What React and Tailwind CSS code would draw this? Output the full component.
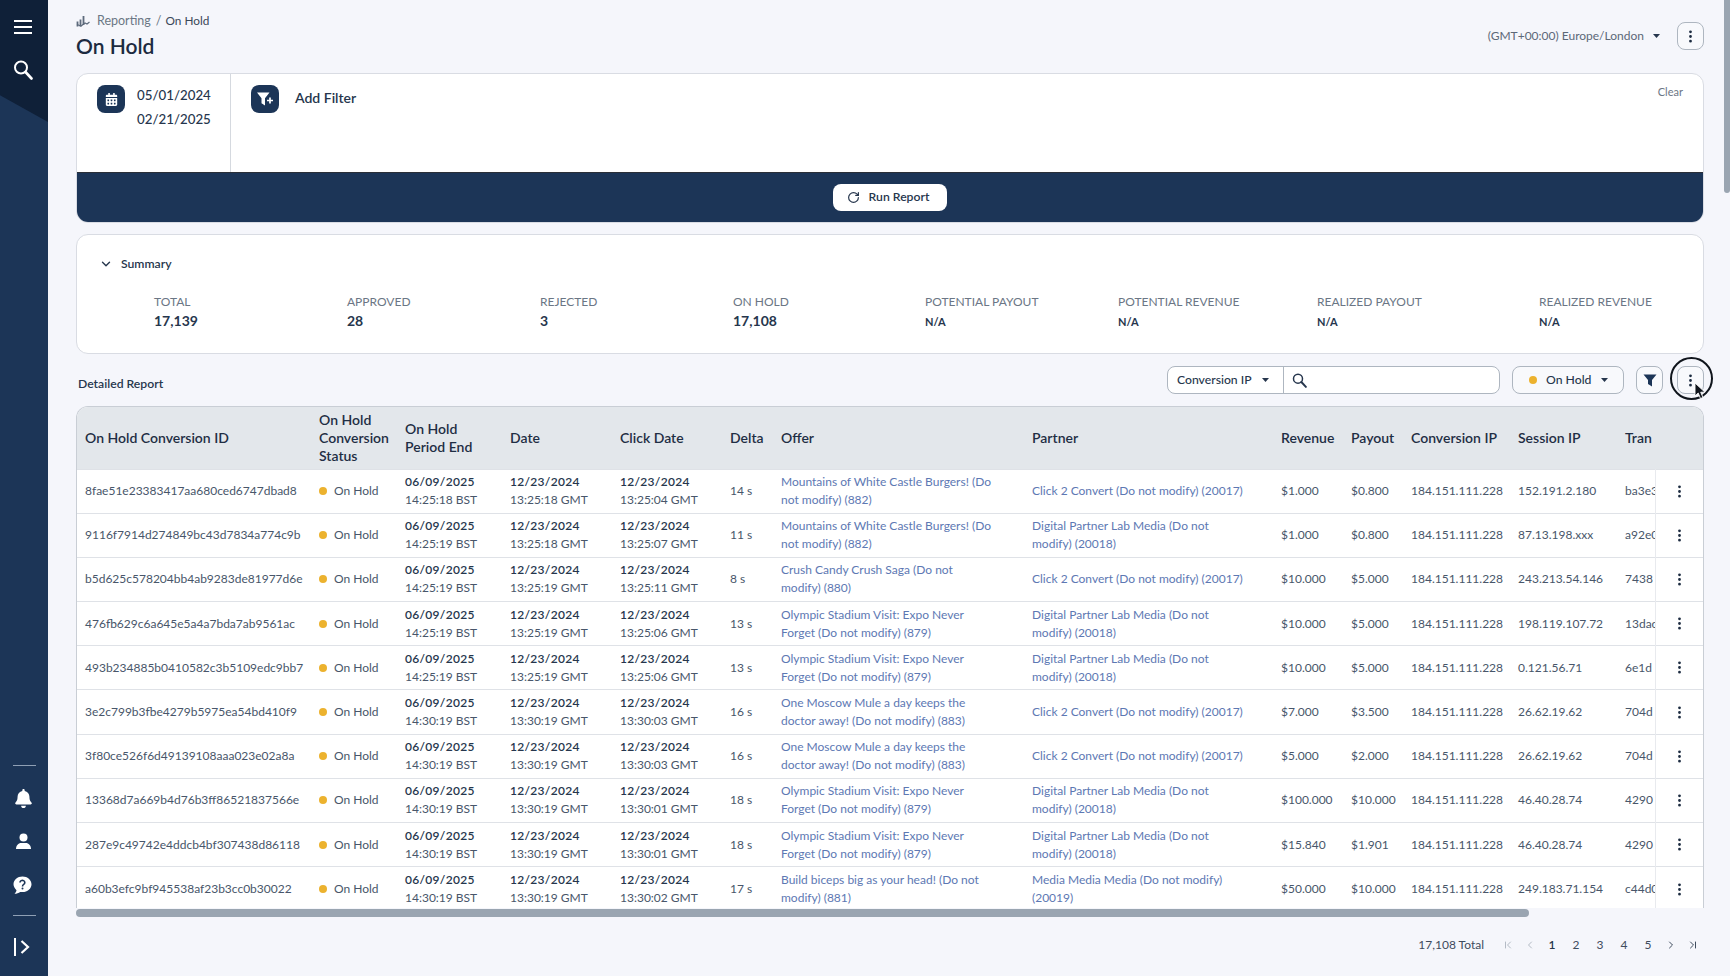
import React from "react";
import { ChevronDown, ChevronLeft, ChevronRight, ChevronFirst, ChevronLast, RotateCw } from "lucide-react";
import { FaBell, FaCalendarAlt } from "react-icons/fa";
import { BsThreeDotsVertical } from "react-icons/bs";

const mountains = "Mountains of White Castle Burgers! (Do not modify) (882)";
const olympic = "Olympic Stadium Visit: Expo Never Forget (Do not modify) (879)";
const moscow = "One Moscow Mule a day keeps the doctor away! (Do not modify) (883)";
const click2 = "Click 2 Convert (Do not modify) (20017)";
const digital = "Digital Partner Lab Media (Do not modify) (20018)";

const rows = [
  ["8fae51e23383417aa680ced6747dbad8", "14:25:18 BST", "13:25:18 GMT", "13:25:04 GMT", "14 s", mountains, click2, "$1.000", "$0.800", "152.191.2.180", "ba3e3f1"],
  ["9116f7914d274849bc43d7834a774c9b", "14:25:19 BST", "13:25:18 GMT", "13:25:07 GMT", "11 s", mountains, digital, "$1.000", "$0.800", "87.13.198.xxx", "a92e0c1"],
  ["b5d625c578204bb4ab9283de81977d6e", "14:25:19 BST", "13:25:19 GMT", "13:25:11 GMT", "8 s", "Crush Candy Crush Saga (Do not modify) (880)", click2, "$10.000", "$5.000", "243.213.54.146", "7438"],
  ["476fb629c6a645e5a4a7bda7ab9561ac", "14:25:19 BST", "13:25:19 GMT", "13:25:06 GMT", "13 s", olympic, digital, "$10.000", "$5.000", "198.119.107.72", "13dac41"],
  ["493b234885b0410582c3b5109edc9bb7", "14:25:19 BST", "13:25:19 GMT", "13:25:06 GMT", "13 s", olympic, digital, "$10.000", "$5.000", "0.121.56.71", "6e1d"],
  ["3e2c799b3fbe4279b5975ea54bd410f9", "14:30:19 BST", "13:30:19 GMT", "13:30:03 GMT", "16 s", moscow, click2, "$7.000", "$3.500", "26.62.19.62", "704d"],
  ["3f80ce526f6d49139108aaa023e02a8a", "14:30:19 BST", "13:30:19 GMT", "13:30:03 GMT", "16 s", moscow, click2, "$5.000", "$2.000", "26.62.19.62", "704d"],
  ["13368d7a669b4d76b3ff86521837566e", "14:30:19 BST", "13:30:19 GMT", "13:30:01 GMT", "18 s", olympic, digital, "$100.000", "$10.000", "46.40.28.74", "4290"],
  ["287e9c49742e4ddcb4bf307438d86118", "14:30:19 BST", "13:30:19 GMT", "13:30:01 GMT", "18 s", olympic, digital, "$15.840", "$1.901", "46.40.28.74", "4290"],
  ["a60b3efc9bf945538af23b3cc0b30022", "14:30:19 BST", "13:30:19 GMT", "13:30:02 GMT", "17 s", "Build biceps big as your head! (Do not modify) (881)", "Media Media Media (Do not modify) (20019)", "$50.000", "$10.000", "249.183.71.154", "c44d0e8"],
];

const stats = [
  ["TOTAL", "17,139"],
  ["APPROVED", "28"],
  ["REJECTED", "3"],
  ["ON HOLD", "17,108"],
  ["POTENTIAL PAYOUT", "N/A"],
  ["POTENTIAL REVENUE", "N/A"],
  ["REALIZED PAYOUT", "N/A"],
  ["REALIZED REVENUE", "N/A"],
];

const Caret = () => (
  <svg width="7" height="4" viewBox="0 0 7 4" className="shrink-0">
    <path d="M0 0h7L3.500 4z" fill="#26364d" />
  </svg>
);

const SearchIcon = ({ size, color }) => (
  <svg width={size} height={size} viewBox="0 0 20 20" className="shrink-0">
    <circle cx="8" cy="7.500" r="6" fill="none" stroke={color} strokeWidth="2" />
    <path d="M12.500 12l6 6.500" stroke={color} strokeWidth="2.600" strokeLinecap="round" />
  </svg>
);

const HelpIcon = () => (
  <svg width="20" height="20" viewBox="0 0 20 20">
    <path d="M10.500 1.500c5 0 9 3.400 9 7.800s-4 7.800-9 7.800c-.8 0-1.600-.1-2.300-.2-1.500 1.100-3.600 1.800-5.700 1.900 1.100-1 1.800-2.200 2-3.500C2.700 13.400 1.500 11.500 1.500 9.300c0-4.400 4-7.800 9-7.800z" fill="#fff" />
    <path d="M8 7.500a2.400 2.200 0 1 1 3.700 1.900c-.9.600-1.200 1-1.200 2" fill="none" stroke="#1c3557" strokeWidth="1.600" />
    <circle cx="10.500" cy="13.500" r="1" fill="#1c3557" />
  </svg>
);

const UserIcon = () => (
  <svg width="17" height="17" viewBox="0 0 17 17">
    <circle cx="8.500" cy="4.500" r="4" fill="#fff" />
    <path d="M1 16c0-3.500 2.500-6 5-6h5c2.500 0 5 2.500 5 6z" fill="#fff" />
  </svg>
);

const FilterPlus = () => (
  <svg width="18" height="18" viewBox="0 0 18 18">
    <path d="M1 2.500h12.500L9 8.300v7.200l-3.500-2.200V8.300z" fill="#fff" />
    <path d="M14 7.500v6M11 10.500h6" stroke="#fff" strokeWidth="1.700" />
  </svg>
);

const FunnelIcon = () => (
  <svg width="14" height="14" viewBox="0 0 14 14">
    <path d="M.5 1.500h13L9 7v6.500L5 11V7z" fill="#1c3557" />
  </svg>
);

const ChartIcon = () => (
  <svg width="14" height="12" viewBox="0 0 14 12" className="shrink-0">
    <path d="M1.500 6.500v5M4.500 4.500v7M7.500 1v9" stroke="#5d6a7c" strokeWidth="1.800" />
    <path d="M1 9.500l4 1.500 4-3 2 1 2.500-2" stroke="#5d6a7c" strokeWidth="1.200" fill="none" />
  </svg>
);

const IconButton = ({ children }) => (
  <button className="w-[27px] h-[28px] flex items-center justify-center rounded-lg border border-[#aeb6c0] bg-[#f8f9fc] relative">
    {children}
  </button>
);

const Sidebar = () => (
  <aside className="relative w-12 shrink-0 bg-[#1c3557] text-white flex flex-col items-center">
    <div className="absolute inset-x-0 top-0 h-[122px] bg-[#0f2038] [clip-path:polygon(0_0,100%_0,100%_100%,0_78%)]"></div>
    <div className="relative flex flex-col items-center pt-[20px] pr-[2px]">
      <svg width="18" height="14" viewBox="0 0 18 14">
        <path d="M0 1h18M0 7h18M0 13h18" stroke="#fff" strokeWidth="2" />
      </svg>
      <div className="mt-[26px]">
        <SearchIcon size={20} color="#fff" />
      </div>
    </div>
    <div className="relative mt-auto w-full flex flex-col items-center pb-[20px] pr-[2px]">
      <div className="w-[23px] h-px bg-[#8fa0b5] ml-[2px]"></div>
      <FaBell size={19} className="mt-[23px]" />
      <div className="mt-[25px]">
        <UserIcon />
      </div>
      <div className="mt-[25px] -ml-[2px]">
        <HelpIcon />
      </div>
      <div className="w-[23px] h-px bg-[#8fa0b5] mt-[20px] ml-[2px]"></div>
      <div className="mt-[22px] flex items-center gap-[4px] -ml-[2px]">
        <div className="w-0.5 h-[18px] bg-white"></div>
        <svg width="10" height="14" viewBox="0 0 10 14">
          <path d="M1.500 1l6.500 6-6.500 6" fill="none" stroke="#fff" strokeWidth="2.200" />
        </svg>
      </div>
    </div>
  </aside>
);

const Header = () => (
  <div className="h-[73px] flex justify-between">
    <div>
      <div className="flex items-center gap-[5px] pt-[13px] text-[12.500px] leading-[15px] text-[#6b7685]">
        <ChartIcon />
        <span className="ml-[2px]">Reporting</span>
        <span>/</span>
        <span className="-ml-px text-[11.800px] text-[#3a4859]">On Hold</span>
      </div>
      <h1 className="mt-[5px] text-[21px] leading-[26px] font-semibold text-[#1c2b40]">On Hold</h1>
    </div>
    <div className="flex items-start gap-[17px] pt-[22px]">
      <div className="h-7 flex items-center gap-[9px] text-[12px] text-[#5c6878]">
        <span>(GMT+00:00) Europe/London</span>
        <Caret />
      </div>
      <IconButton>
        <BsThreeDotsVertical size={15} className="text-[#1c2b40]" />
      </IconButton>
    </div>
  </div>
);

const FilterCard = () => (
  <div className="h-[150px] rounded-xl border border-[#d9dce3] bg-white overflow-hidden flex flex-col">
    <div className="flex-1 flex relative">
      <div className="w-[154px] shrink-0 border-r border-[#d5d9df] pl-[20px] pt-[10px] flex gap-[12px]">
        <div className="w-7 h-7 rounded-lg bg-[#1c3557] flex items-center justify-center mt-px">
          <FaCalendarAlt size={13} className="text-white" />
        </div>
        <div className="-mt-px text-[13.300px] leading-[24px] font-medium text-[#26364d]">
          <div>05/01/2024</div>
          <div>02/21/2025</div>
        </div>
      </div>
      <div className="flex items-start gap-[16px] pl-[20px] pt-[10px]">
        <div className="w-7 h-7 rounded-lg bg-[#1c3557] flex items-center justify-center mt-px">
          <FilterPlus />
        </div>
        <span className="text-[14px] leading-[28px] font-semibold text-[#26364d]">Add Filter</span>
      </div>
      <span className="ml-auto pr-[20px] pt-[11px] text-[11px] leading-[14px] text-[#6b7685]">Clear</span>
    </div>
    <div className="h-[50px] bg-[#1c3557] border-t border-[#2a2f38] flex items-center justify-center">
      <button className="w-[114px] h-[27px] bg-white rounded-lg flex items-center justify-center gap-[9px] pr-[4px] text-[12.200px] font-semibold text-[#26364d]">
        <RotateCw size={13} strokeWidth={2.2} />
        Run Report
      </button>
    </div>
  </div>
);

const Summary = () => (
  <div className="mt-[11px] h-[120px] rounded-xl border border-[#d9dce3] bg-white pt-[20px]">
    <div className="flex items-center pl-[22px] gap-[8px] text-[12.200px] leading-[18px] font-semibold text-[#26364d]">
      <ChevronDown size={14} strokeWidth={2.4} />
      Summary
    </div>
    <div className="mt-[21px] pl-[77px] grid grid-cols-[193px_193px_193px_192px_193px_199px_222px_auto]">
      {stats.map(([label, value]) => (
        <div key={label}>
          <div className="text-[12px] leading-[16px] text-[#6b7685]">{label}</div>
          <div className={value === "N/A" ? "text-[11px] leading-[22px] mt-px font-bold text-[#26364d]" : "text-[14px] leading-[22px] font-bold text-[#26364d]"}>
            {value}
          </div>
        </div>
      ))}
    </div>
  </div>
);

const Toolbar = () => (
  <div className="mt-[12px] h-7 flex items-center">
    <span className="pl-[2px] pt-[8px] text-[12.200px] font-semibold text-[#26364d]">Detailed Report</span>
    <div className="ml-auto w-[333px] h-7 flex rounded-lg border border-[#aeb6c0] bg-white">
      <div className="w-[116px] border-r border-[#aeb6c0] flex items-center justify-between pl-[9px] pr-[14px] text-[12.200px] font-medium text-[#26364d]">
        Conversion IP
        <Caret />
      </div>
      <div className="flex-1 flex items-center pl-[8px]">
        <SearchIcon size={15} color="#26364d" />
      </div>
    </div>
    <div className="ml-3 w-[112px] h-7 rounded-lg border border-[#aeb6c0] bg-[#f8f9fc] flex items-center pl-[16px] text-[12.200px] font-medium text-[#26364d]">
      <span className="w-2 h-2 rounded-full bg-[#ecb22e]"></span>
      <span className="ml-[9px]">On Hold</span>
      <span className="ml-[10px]"><Caret /></span>
    </div>
    <div className="ml-[12px]">
      <IconButton>
        <FunnelIcon />
      </IconButton>
    </div>
    <div className="ml-[14px]">
      <IconButton>
        <BsThreeDotsVertical size={15} className="text-[#1c2b40]" />
        <span className="absolute left-1/2 top-1/2 -ml-[21px] -mt-[23px] w-[43px] h-[43px] rounded-full border-2 border-[#10151c]"></span>
        <svg width="13" height="18" viewBox="0 0 13 18" className="absolute left-[16px] top-[15px]">
          <path d="M1 1v13l3.200-3 2.300 5.500 2.500-1-2.300-5.300h4.300z" fill="#10151c" stroke="#fff" strokeWidth="0.900" />
        </svg>
      </IconButton>
    </div>
  </div>
);

const ReportTable = () => (
  <>
    <div className="mt-[12px] h-[502px] rounded-t-xl border-x border-t border-[#c9ced5] bg-white overflow-hidden">
      <table className="table-fixed w-[1627px] border-collapse text-[12px] text-left">
        <colgroup>
          <col className="w-[234px]" />
          <col className="w-[86px]" />
          <col className="w-[105px]" />
          <col className="w-[110px]" />
          <col className="w-[110px]" />
          <col className="w-[51px]" />
          <col className="w-[251px]" />
          <col className="w-[249px]" />
          <col className="w-[70px]" />
          <col className="w-[60px]" />
          <col className="w-[107px]" />
          <col className="w-[107px]" />
          <col className="w-[38px]" />
          <col className="w-[49px]" />
        </colgroup>
        <thead>
          <tr className="h-[62px] bg-[#e3e7eb] text-[14px] leading-[18px] text-[#1f2e44]">
            <th className="pl-2 font-semibold">On Hold Conversion ID</th>
            <th className="pl-2 font-semibold">On Hold Conversion Status</th>
            <th className="pl-2 font-semibold">
              <div className="w-[80px]">On Hold Period End</div>
            </th>
            <th className="pl-2 font-semibold">Date</th>
            <th className="pl-2 font-semibold">Click Date</th>
            <th className="pl-2 font-semibold">Delta</th>
            <th className="pl-2 font-semibold">Offer</th>
            <th className="pl-2 font-semibold">Partner</th>
            <th className="pl-2 font-semibold">Revenue</th>
            <th className="pl-2 font-semibold">Payout</th>
            <th className="pl-2 font-semibold">Conversion IP</th>
            <th className="pl-2 font-semibold">Session IP</th>
            <th className="pl-2 font-semibold overflow-hidden">Tran</th>
            <th></th>
          </tr>
        </thead>
        <tbody className="leading-[18px] text-[#48566a]">
          {rows.map((r) => (
            <tr key={r[0]} className="h-[44.200px] border-t border-[#dfe2e7]">
              <td className="pl-2 whitespace-nowrap">{r[0]}</td>
              <td className="pl-2">
                <div className="flex items-center gap-[7px]">
                  <span className="w-2 h-2 rounded-full bg-[#ecb22e]"></span>
                  On Hold
                </div>
              </td>
              <td className="pl-2">
                <div className="tracking-[0.3px] font-semibold text-[#26364d]">06/09/2025</div>
                <div>{r[1]}</div>
              </td>
              <td className="pl-2">
                <div className="tracking-[0.3px] font-semibold text-[#26364d]">12/23/2024</div>
                <div className="whitespace-nowrap">{r[2]}</div>
              </td>
              <td className="pl-2">
                <div className="tracking-[0.3px] font-semibold text-[#26364d]">12/23/2024</div>
                <div className="whitespace-nowrap">{r[3]}</div>
              </td>
              <td className="pl-2">{r[4]}</td>
              <td className="pl-2 text-[#5d78b3]">
                <div className="w-[212px]">{r[5]}</div>
              </td>
              <td className="pl-2 text-[#5d78b3]">
                <div className="w-[218px]">{r[6]}</div>
              </td>
              <td className="pl-2">{r[7]}</td>
              <td className="pl-2">{r[8]}</td>
              <td className="pl-2">184.151.111.228</td>
              <td className="pl-2 whitespace-nowrap">{r[9]}</td>
              <td className="pl-2 whitespace-nowrap overflow-hidden">{r[10]}</td>
              <td className="border-l border-[#e8eaee]">
                <div className="flex justify-center">
                  <BsThreeDotsVertical size={15} className="text-[#1c2b40]" />
                </div>
              </td>
            </tr>
          ))}
        </tbody>
      </table>
    </div>
    <div className="h-2 mt-px">
      <div className="w-[1453px] h-2 rounded-full bg-[#9aa5b1]"></div>
    </div>
  </>
);

const Pagination = () => (
  <div className="mt-[19px] flex items-center justify-end text-[12px] text-[#3f4c5e]">
    <span className="mr-[12px]">17,108 Total</span>
    <span className="w-6 flex justify-center text-[#b4bbc5]"><ChevronFirst size={12} /></span>
    <span className="w-[20px] flex justify-center text-[#b4bbc5]"><ChevronLeft size={12} /></span>
    <span className="w-6 text-center font-semibold text-[#26364d]">1</span>
    <span className="w-6 text-center">2</span>
    <span className="w-6 text-center">3</span>
    <span className="w-6 text-center">4</span>
    <span className="w-6 text-center">5</span>
    <span className="w-[22px] flex justify-center"><ChevronRight size={12} /></span>
    <span className="w-[22px] flex justify-center"><ChevronLast size={12} /></span>
  </div>
);

export default function App() {
  return (
    <div className="relative h-screen flex overflow-hidden bg-[#f5f6fb] font-[Lato,sans-serif]">
      <Sidebar />
      <main className="flex-1 min-w-0 pl-7 pr-[26px]">
        <Header />
        <FilterCard />
        <Summary />
        <Toolbar />
        <ReportTable />
        <Pagination />
      </main>
      <div className="absolute right-0 top-0 w-[6px] h-[193px] rounded-b bg-[#9aa5b1]"></div>
    </div>
  );
}
